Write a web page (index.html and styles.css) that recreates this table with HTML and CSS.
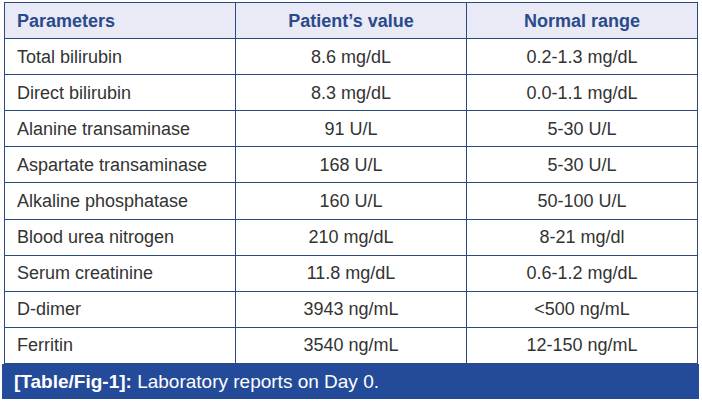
FILE: index.html
```html
<!DOCTYPE html>
<html>
<head>
<meta charset="utf-8">
<link rel="stylesheet" href="styles.css">
</head>
<body>
<div class="figure">
  <table class="lab">
    <thead>
      <tr><th class="left">Parameters</th><th>Patient’s value</th><th>Normal range</th></tr>
    </thead>
    <tbody>
      <tr><td class="left">Total bilirubin</td><td>8.6 mg/dL</td><td>0.2-1.3 mg/dL</td></tr>
      <tr><td class="left">Direct bilirubin</td><td>8.3 mg/dL</td><td>0.0-1.1 mg/dL</td></tr>
      <tr><td class="left">Alanine transaminase</td><td>91 U/L</td><td>5-30 U/L</td></tr>
      <tr><td class="left">Aspartate transaminase</td><td>168 U/L</td><td>5-30 U/L</td></tr>
      <tr><td class="left">Alkaline phosphatase</td><td>160 U/L</td><td>50-100 U/L</td></tr>
      <tr><td class="left">Blood urea nitrogen</td><td>210 mg/dL</td><td>8-21 mg/dl</td></tr>
      <tr><td class="left">Serum creatinine</td><td>11.8 mg/dL</td><td>0.6-1.2 mg/dL</td></tr>
      <tr><td class="left">D-dimer</td><td>3943 ng/mL</td><td>&lt;500 ng/mL</td></tr>
      <tr><td class="left">Ferritin</td><td>3540 ng/mL</td><td>12-150 ng/mL</td></tr>
    </tbody>
  </table>
  <div class="caption"><b>[Table/Fig-1]:</b> Laboratory reports on Day 0.</div>
</div>
</body>
</html>
```

FILE: styles.css
```css
html, body {
  margin: 0;
  padding: 0;
  background: #ffffff;
}
body {
  font-family: "Liberation Sans", Arial, sans-serif;
  font-size: 18px;
  color: #333333;
}
.figure {
  padding: 2px 3px 0 4px;
  width: 695px;
}
.lab {
  width: 694px;
  border-collapse: collapse;
  table-layout: fixed;
}
.lab th, .lab td {
  border: 1.5px solid #2b4a7d;
  height: 35.1px;
  padding: 0 12px;
  text-align: center;
  vertical-align: middle;
  white-space: nowrap;
  line-height: 20px;
}
.lab th {
  background: #e9eaf5;
  color: #2a4b8b;
  font-weight: bold;
}
.lab .left {
  text-align: left;
}
.caption {
  height: 35px;
  margin-left: -2px;
  width: 697px;
  box-sizing: border-box;
  background: #244b99;
  color: #ffffff;
  padding: 0 0 0 12px;
  font-size: 19px;
  line-height: 36px;
  white-space: nowrap;
}
.caption b {
  font-weight: bold;
}
```
